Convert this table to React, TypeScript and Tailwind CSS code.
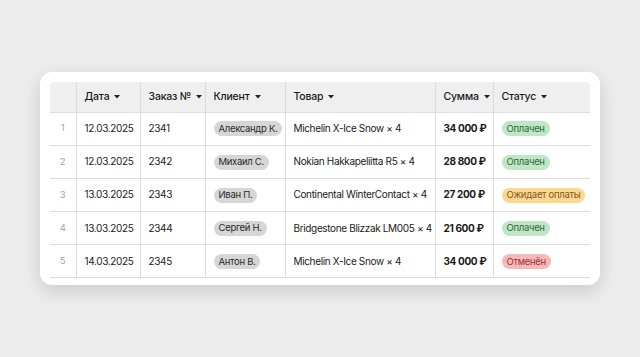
import React from "react";

type Status = "paid" | "pending" | "cancel";
const rows: { d: string; n: string; c: string; t: string; s: string; st: Status }[] = [
  { d: "12.03.2025", n: "2341", c: "Александр К.", t: "Michelin X-Ice Snow × 4", s: "34 000 ₽", st: "paid" },
  { d: "12.03.2025", n: "2342", c: "Михаил С.", t: "Nokian Hakkapeliitta R5 × 4", s: "28 800 ₽", st: "paid" },
  { d: "13.03.2025", n: "2343", c: "Иван П.", t: "Continental WinterContact × 4", s: "27 200 ₽", st: "pending" },
  { d: "13.03.2025", n: "2344", c: "Сергей Н.", t: "Bridgestone Blizzak LM005 × 4", s: "21 600 ₽", st: "paid" },
  { d: "14.03.2025", n: "2345", c: "Антон В.", t: "Michelin X-Ice Snow × 4", s: "34 000 ₽", st: "cancel" },
];

function Caret() {
  return (
    <svg width="6" height="4" viewBox="0 0 6 4" className="ml-[5px] inline-block align-middle">
      <path d="M0 0 L6 0 L3 3.6 Z" fill="#222" />
    </svg>
  );
}

const pill = "inline-flex h-[15px] items-center rounded-full px-[5px] text-[9.5px] tracking-[-0.3px]";

function StatusPill({ st }: { st: Status }) {
  if (st === "paid")
    return <span className={pill + " bg-[#bfe6c5] text-[#2e6b3a]"}>Оплачен</span>;
  if (st === "pending")
    return <span className={pill + " bg-[#fbd88f] text-[#86591a]"}>Ожидает оплаты</span>;
  return <span className={pill + " bg-[#f6b9ba] text-[#9e3034]"}>Отменён</span>;
}

export default function App() {
  const th = "h-[30px] border-l border-[#dcdcdc] px-[8px] text-left align-middle font-medium text-[10.5px] tracking-[-0.2px] text-[#1a1a1a] whitespace-nowrap";
  const td = "h-[33.2px] border-l border-t border-[#dedede] px-[8px] align-middle text-[10px] tracking-[-0.35px] text-[#1a1a1a] whitespace-nowrap";
  return (
    <div
      className="flex h-[357px] w-[640px] items-start justify-center bg-[#ececec] pt-[72px]"
      style={{ fontFamily: "Inter, 'Liberation Sans', sans-serif" }}
    >
      <div className="w-[560px] rounded-[12px] bg-white px-[10px] pt-[10px] pb-[7px] shadow-[0_6px_18px_rgba(0,0,0,0.14)]">
        <table className="w-[540px] table-fixed border-collapse">
          <colgroup>
            <col className="w-[26px]" />
            <col className="w-[64px]" />
            <col className="w-[65px]" />
            <col className="w-[80px]" />
            <col className="w-[150px]" />
            <col className="w-[58px]" />
            <col className="w-[97px]" />
          </colgroup>
          <thead>
            <tr className="bg-[#efefef]">
              <th className="h-[30px] rounded-tl-[4px]"></th>
              <th className={th}>Дата<Caret /></th>
              <th className={th}>Заказ №<Caret /></th>
              <th className={th}>Клиент<Caret /></th>
              <th className={th}>Товар<Caret /></th>
              <th className={th}>Сумма<Caret /></th>
              <th className={th + " rounded-tr-[4px]"}>Статус<Caret /></th>
            </tr>
          </thead>
          <tbody>
            {rows.map((r, i) => (
              <tr key={i} className={i === rows.length - 1 ? "border-b border-[#dedede]" : ""}>
                <td className="h-[33.2px] border-t border-[#dedede] text-center align-middle text-[9.5px] text-[#a3a3a3]">{i + 1}</td>
                <td className={td}>{r.d}</td>
                <td className={td}>{r.n}</td>
                <td className={td}>
                  <span className={pill + " bg-[#d6d6d6] text-[#2a2a2a]"}>{r.c}</span>
                </td>
                <td className={td}>{r.t}</td>
                <td className={td + " font-bold"}>{r.s}</td>
                <td className={td}><StatusPill st={r.st} /></td>
              </tr>
            ))}
          </tbody>
        </table>
      </div>
    </div>
  );
}
